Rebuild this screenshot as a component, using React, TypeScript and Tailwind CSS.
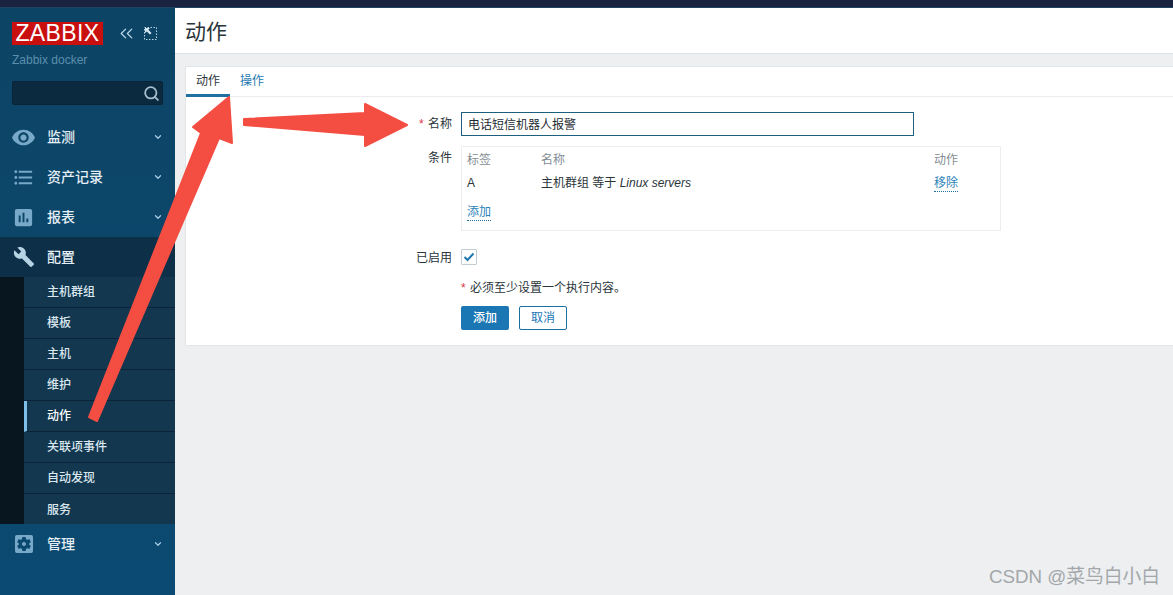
import React from "react";
import { ChevronDown, ChevronsLeft, Search } from "lucide-react";
import { MdRemoveRedEye, MdFormatListBulleted, MdAssessment, MdBuild, MdSettingsApplications } from "react-icons/md";

const FONT = "font-['Liberation_Sans','Noto_Sans_CJK_SC',sans-serif]";

function NavItem({ icon, label, open }: { icon: React.ReactNode; label: string; open?: boolean }) {
  return (
    <div className={`flex h-10 items-center ${open ? "bg-[#0e2f48]" : ""}`}>
      <div className="flex w-[47px] justify-center">{icon}</div>
      <span className="text-[14px] font-medium text-[#e3eef5]">{label}</span>
      {!open && <ChevronDown className="ml-auto mr-[12px] text-[#a7cbe2]" size={10} strokeWidth={3} />}
    </div>
  );
}

function SubItem({ label, active, last }: { label: string; active?: boolean; last?: boolean }) {
  return (
    <div
      className={`flex h-[31px] items-center border-[#0a2338] pl-[23px] text-[12px] font-medium text-[#dbe7ef] ${last ? "" : "border-b"} ${
        active ? "border-l-[3px] !pl-[20px] border-l-[#7cc0ea] text-white" : ""
      }`}
    >
      {label}
    </div>
  );
}

function Sidebar() {
  return (
    <aside className="flex w-[175px] shrink-0 flex-col bg-[#0b466b] bg-gradient-to-b from-[#0c4465] to-[#0b4a72]">
      <div className="flex h-[109px] flex-col px-[12px] pt-[14px]">
        <div className="flex items-center">
          <div className="flex h-[23px] w-[91px] items-center justify-center bg-[#c9100f] text-[23px] leading-none tracking-[0.4px] text-white">
            ZABBIX
          </div>
          <ChevronsLeft className="ml-[13px] text-[#b9d6e8]" size={21} strokeWidth={1.5} />
          <svg className="ml-[7px]" width="14" height="14" viewBox="0 0 14 14" fill="none">
            <rect x="0.5" y="0.5" width="12" height="12" stroke="#b9d6e8" strokeDasharray="1.5 1.5" />
            <path d="M1 1h5L4.4 2.8 7.5 6 6 7.5 2.8 4.4 1 6z" fill="#d5e7f2" />
          </svg>
        </div>
        <div className="mt-[8px] text-[12px] leading-[14px] text-[#5d8fac]">Zabbix docker</div>
        <div className="mt-[14px] flex h-[24px] items-center justify-end rounded-[2px] border border-[#082436] bg-[#0b2a40] pr-[2px]">
          <Search className="text-[#a6bfce]" size={17} strokeWidth={2.5} />
        </div>
      </div>
      <div>
        <NavItem label="监测" icon={<MdRemoveRedEye size={25} className="text-[#78a9c8]" />} />
        <NavItem label="资产记录" icon={<MdFormatListBulleted size={23} className="text-[#78a9c8]" />} />
        <NavItem label="报表" icon={<MdAssessment size={23} className="text-[#78a9c8]" />} />
        <NavItem label="配置" open icon={<MdBuild size={22} className="text-[#b6d3e4]" />} />
        <div className="flex h-[247px]">
          <div className="w-[24px] bg-[#07161f]" />
          <div className="flex-1 bg-[#12374f]">
            <SubItem label="主机群组" />
            <SubItem label="模板" />
            <SubItem label="主机" />
            <SubItem label="维护" />
            <SubItem label="动作" active />
            <SubItem label="关联项事件" />
            <SubItem label="自动发现" />
            <SubItem label="服务" last />
          </div>
        </div>
        <NavItem label="管理" icon={<MdSettingsApplications size={24} className="text-[#78a9c8]" />} />
      </div>
    </aside>
  );
}

function Form() {
  const Label = ({ children }: { children: React.ReactNode }) => (
    <div className="w-[266px] shrink-0 text-right text-[12px] leading-[16px] text-[#2a353a]">{children}</div>
  );
  return (
    <div className="ml-[10px] mt-[12px] h-[280px] rounded-tl-[2px] border border-r-0 border-[#e2e6e9] bg-white">
      <div className="flex h-[30px] border-b border-[#ebeef0] text-[12px]">
        <div className="flex h-[30px] w-[44px] items-center justify-center border-b-[3px] border-[#1f6f9f] text-[#2a353a]">动作</div>
        <div className="flex w-[44px] items-center justify-center pb-[2px] text-[#1f7ab0]">操作</div>
      </div>
      <div className="pt-[15px]">
        <div className="flex items-start">
          <div className="pt-[4px]">
            <Label>
              <span className="mr-[1px] text-[#d8354b]">*</span> 名称
            </Label>
          </div>
          <div className="ml-[9px] flex h-[24px] w-[453px] items-center border border-[#1f5f7e] px-[6px] pt-[1px] text-[12px] text-[#1f2c33]">
            电话短信机器人报警
          </div>
        </div>
        <div className="mt-[10px] flex items-start">
          <div className="pt-[4px]">
            <Label>条件</Label>
          </div>
          <div className="ml-[9px] h-[85px] w-[540px] border border-[#ebeef0] px-[5px] pt-[5px] text-[12px] leading-[16px]">
            <div className="flex text-[#848d93]">
              <div className="w-[74px]">标签</div>
              <div className="w-[393px]">名称</div>
              <div>动作</div>
            </div>
            <div className="mt-[7px] flex text-[#2a353a]">
              <div className="w-[74px]">A</div>
              <div className="w-[393px]">
                主机群组 等于 <em>Linux servers</em>
              </div>
              <div className="border-b border-dotted border-[#1f6f9f] text-[#2b82b8]">移除</div>
            </div>
            <div className="mt-[12px] inline-block border-b border-dotted border-[#1f6f9f] text-[#2b82b8]">添加</div>
          </div>
        </div>
        <div className="mt-[17px] flex items-center">
          <div className="pt-[2px]">
            <Label>已启用</Label>
          </div>
          <div className="ml-[9px] flex h-[16px] w-[16px] items-center justify-center rounded-[1px] border border-[#c3ccd2]">
            <svg width="12" height="10" viewBox="0 0 12 10" fill="none">
              <path d="M1.5 5l3 3 6-6.5" stroke="#1f78ad" strokeWidth="2" />
            </svg>
          </div>
        </div>
        <div className="ml-[275px] mt-[14px] text-[12px] leading-[16px] text-[#2a353a]">
          <span className="mr-[1px] text-[#d8354b]">*</span> 必须至少设置一个执行内容。
        </div>
        <div className="ml-[275px] mt-[10px] flex gap-[10px] text-[12px]">
          <div className="flex h-[24px] w-[48px] items-center justify-center rounded-[2px] bg-[#1b77b4] font-medium text-white">添加</div>
          <div className="flex h-[24px] w-[48px] items-center justify-center rounded-[2px] border border-[#1b6f9f] text-[#1b77b4]">取消</div>
        </div>
      </div>
    </div>
  );
}

export default function App() {
  return (
    <div className={`relative flex h-[595px] w-[1173px] flex-col overflow-hidden bg-[#edeff1] ${FONT}`}>
      <div className="h-[8px] shrink-0 border-b-[1px] border-[#1f4468] bg-[#1a2340]" />
      <div className="flex flex-1">
        <Sidebar />
        <main className="flex-1">
          <div className="flex h-[46px] items-center border-b border-[#dfe3e6] bg-white pl-[10px] pt-[2px] text-[21px] text-[#2a353a]">动作</div>
          <Form />
        </main>
      </div>
      <div className="absolute bottom-[8px] right-[13px] text-[18.75px] leading-[20px] text-[#a3a7aa]">CSDN @菜鸟白小白</div>
      <svg className="pointer-events-none absolute left-0 top-0" width="1173" height="595" viewBox="0 0 1173 595">
        <g fill="#f44d42" stroke="#f44d42" strokeWidth="2" strokeLinejoin="round">
          <polygon points="89,417 201,133 193,127 229,97 232,143 219,138 97,421" />
          <polygon points="244,119 365,113 365,104 407,125 365,146 365,135 244,125" />
        </g>
      </svg>
    </div>
  );
}
